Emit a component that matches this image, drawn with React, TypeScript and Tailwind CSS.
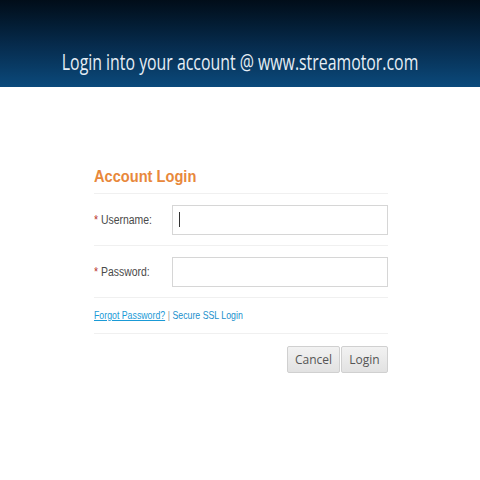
import React from 'react';

const App = () => {
  return (
    <div className="w-[480px] h-[480px] bg-white overflow-hidden" style={{ fontFamily: '"Liberation Sans", Arial, sans-serif' }}>
      {/* Header banner */}
      <div className="h-[87px] bg-gradient-to-b from-[#010d19] via-[#062a4b] to-[#0b4a7c] flex items-end justify-center pb-[14px]">
        <h1 className="inline-block whitespace-nowrap origin-center scale-x-[0.755] text-[#e6eef5] text-[21px] leading-none" style={{ fontFamily: '"Open Sans", sans-serif' }}>
          Login into your account @ www.streamotor.com
        </h1>
      </div>

      {/* Login form */}
      <div className="ml-[94px] w-[294px] mt-[81px]">
        <div className="flex pb-[8px] border-b border-[#f0f0f0]">
          <h2 className="origin-left scale-x-[0.86] text-[#e8883b] text-[17px] font-bold leading-none whitespace-nowrap">
            Account Login
          </h2>
        </div>

        <div className="flex items-center h-[52px] border-b border-[#f0f0f0]">
          <div className="flex w-[78px]">
            <label className="origin-left scale-x-[0.87] whitespace-nowrap text-[12px] text-[#4a4a4a]">
              <span className="text-[#b8322a]">*</span> Username:
            </label>
          </div>
          <div className="flex-1 h-[30px] border border-[#d6d6d6] flex items-center pl-[6px]">
            <div className="w-[1px] h-[15px] bg-[#333]" />
          </div>
        </div>

        <div className="flex items-center h-[52px] border-b border-[#f0f0f0]">
          <div className="flex w-[78px]">
            <label className="origin-left scale-x-[0.87] whitespace-nowrap text-[12px] text-[#4a4a4a]">
              <span className="text-[#b8322a]">*</span> Password:
            </label>
          </div>
          <div className="flex-1 h-[30px] border border-[#d6d6d6]" />
        </div>

        <div className="flex items-center h-[36px] border-b border-[#f0f0f0]">
          <div className="origin-left scale-x-[0.835] whitespace-nowrap text-[10.5px]">
            <a className="text-[#1a9ad6] underline">Forgot Password?</a>
            <span className="text-[#999] mx-[3px]">|</span>
            <span className="text-[#1a8fcc]">Secure SSL Login</span>
          </div>
        </div>

        <div className="flex justify-end mt-[12px]">
          <button className="w-[53px] h-[27px] border border-[#d0d0d0] rounded-[2px] bg-gradient-to-b from-[#f2f2f2] to-[#e2e2e2] text-[12px] text-[#555]" style={{ fontFamily: '"Open Sans", sans-serif' }}>
            Cancel
          </button>
          <button className="w-[47px] h-[27px] ml-[1px] border border-[#d0d0d0] rounded-[2px] bg-gradient-to-b from-[#f2f2f2] to-[#e2e2e2] text-[12px] text-[#555]" style={{ fontFamily: '"Open Sans", sans-serif' }}>
            Login
          </button>
        </div>
      </div>
    </div>
  );
};

export default App;
